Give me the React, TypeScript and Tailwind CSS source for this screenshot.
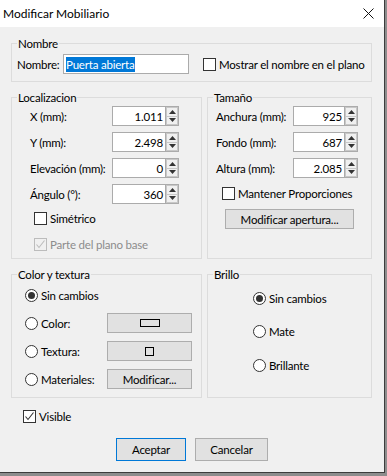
import type { ReactNode } from 'react';

const font = { fontFamily: 'Lato, "Noto Sans", sans-serif' };

function Group({ title, className, children }: { title: string; className: string; children: ReactNode }) {
  return (
    <div className={`relative shrink-0 border border-[#dcdcdc] ${className}`}>
      <span className="absolute -top-[8px] left-[5px] bg-[#f0f0f0] px-px leading-[15px]">{title}</span>
      {children}
    </div>
  );
}

function CheckBox({ checked = false, disabled = false }: { checked?: boolean; disabled?: boolean }) {
  return (
    <span
      className={`flex h-[13px] w-[13px] shrink-0 items-center justify-center border ${
        disabled ? 'border-[#bcbcbc] bg-[#f0f0f0]' : 'border-[#333333] bg-white'
      }`}
    >
      {checked && (
        <svg width="11" height="11" viewBox="0 0 11 11">
          <polyline points="1.5,5.5 4,8.5 9.5,1.5" fill="none" stroke={disabled ? '#bcbcbc' : '#333'} strokeWidth="1.1" />
        </svg>
      )}
    </span>
  );
}

function Radio({ checked = false }: { checked?: boolean }) {
  return (
    <span className="flex h-[13px] w-[13px] shrink-0 items-center justify-center rounded-full border border-[#333333] bg-white">
      {checked && <span className="h-[7px] w-[7px] rounded-full bg-[#333333]" />}
    </span>
  );
}

function Spin({ value, width }: { value: string; width: string }) {
  return (
    <div className="flex h-[20px] shrink-0">
      <div className={`flex ${width} items-center justify-end border border-[#ababab] bg-white pr-[2px]`}>{value}</div>
      <div className="flex w-[13px] flex-col border-y border-r border-[#ababab] bg-white">
        <div className="flex flex-1 items-center justify-center border border-[#c8c8c8] bg-[#f0f0f0]">
          <svg width="7" height="4" viewBox="0 0 7 4"><polygon points="0,4 3.5,0 7,4" fill="#333" /></svg>
        </div>
        <div className="flex flex-1 items-center justify-center border border-t-0 border-[#c8c8c8] bg-[#f0f0f0]">
          <svg width="7" height="4" viewBox="0 0 7 4"><polygon points="0,0 3.5,4 7,0" fill="#333" /></svg>
        </div>
      </div>
    </div>
  );
}

function FieldRow({ label, value, labelWidth, fieldWidth }: { label: string; value: string; labelWidth: string; fieldWidth: string }) {
  return (
    <div className="flex h-[20px] items-center whitespace-nowrap">
      <span className={`shrink-0 ${labelWidth}`}>{label}</span>
      <Spin value={value} width={fieldWidth} />
    </div>
  );
}

function Button({ children, className }: { children: ReactNode; className: string }) {
  return (
    <div className={`flex shrink-0 items-center justify-center whitespace-nowrap border border-[#adadad] bg-[#e1e1e1] ${className}`}>
      {children}
    </div>
  );
}

export default function App() {
  return (
    <div
      className="flex h-[476px] w-[387px] flex-col bg-[#8d8d8d] text-[11.5px] leading-[15px] tracking-[-0.2px] text-black"
      style={font}
    >
      <div className="flex h-[473px] w-[385px] flex-col border-b border-r border-[#3c3c3c] bg-[#f0f0f0]">
        {/* title bar */}
        <div className="flex h-[27px] shrink-0 items-center justify-between bg-white pl-[3px] pr-[10px]">
          <span className="text-[12px] tracking-normal">Modificar Mobiliario</span>
          <svg width="11" height="11" viewBox="0 0 11 11">
            <path d="M0.5 0.5 L10.5 10.5 M10.5 0.5 L0.5 10.5" stroke="#111" strokeWidth="1" />
          </svg>
        </div>

        <div className="flex flex-col whitespace-nowrap px-[11px]">
          <Group title="Nombre" className="mt-[16px] h-[39px] w-[361px]">
            <div className="flex items-center pl-[5px] pt-[10px]">
              <span className="w-[46px] shrink-0">Nombre:</span>
              <div className="flex h-[20px] w-[126px] shrink-0 items-center border border-[#ababab] bg-white pl-[2px]">
                <span className="bg-[#0078d7] text-white">Puerta abierta</span>
              </div>
              <div className="ml-[14px] flex items-center gap-[3px]">
                <CheckBox />
                <span>Mostrar el nombre en el plano</span>
              </div>
            </div>
          </Group>

          <div className="mt-[15px] flex gap-[5px]">
            <Group title="Localizacion" className="h-[162px] w-[191px]">
              <div className="flex flex-col gap-[6px] pl-[18px] pt-[8px]">
                <FieldRow label="X (mm):" value="1.011" labelWidth="w-[82px]" fieldWidth="w-[54px]" />
                <FieldRow label="Y (mm):" value="2.498" labelWidth="w-[82px]" fieldWidth="w-[54px]" />
                <FieldRow label="Elevación (mm):" value="0" labelWidth="w-[82px]" fieldWidth="w-[54px]" />
                <FieldRow label="Ángulo (°):" value="360" labelWidth="w-[82px]" fieldWidth="w-[54px]" />
              </div>
              <div className="mt-[7px] flex items-center gap-[3px] pl-[22px]">
                <CheckBox />
                <span>Simétrico</span>
              </div>
              <div className="mt-[11px] flex items-center gap-[3px] pl-[22px] text-[#8c8c8c]">
                <CheckBox checked disabled />
                <span>Parte del plano base</span>
              </div>
            </Group>

            <Group title="Tamaño" className="h-[162px] w-[165px]">
              <div className="flex flex-col gap-[6px] pl-[8px] pt-[8px]">
                <FieldRow label="Anchura (mm):" value="925" labelWidth="w-[77px]" fieldWidth="w-[52px]" />
                <FieldRow label="Fondo (mm):" value="687" labelWidth="w-[77px]" fieldWidth="w-[52px]" />
                <FieldRow label="Altura (mm):" value="2.085" labelWidth="w-[77px]" fieldWidth="w-[52px]" />
              </div>
              <div className="mt-[8px] flex items-center gap-[3px] pl-[14px]">
                <CheckBox />
                <span>Mantener Proporciones</span>
              </div>
              <div className="mt-[8px] pl-[17px]">
                <Button className="h-[20px] w-[129px]">Modificar apertura...</Button>
              </div>
            </Group>
          </div>

          <div className="mt-[15px] flex gap-[5px]">
            <Group title="Color y textura" className="h-[124px] w-[191px]">
              <div className="flex flex-col gap-[8px] pl-[13px] pt-[10px]">
                <div className="flex h-[20px] items-center gap-[3px]">
                  <Radio checked />
                  <span>Sin cambios</span>
                </div>
                <div className="flex h-[20px] items-center">
                  <div className="flex w-[82px] shrink-0 items-center gap-[3px]">
                    <Radio />
                    <span>Color:</span>
                  </div>
                  <Button className="h-[20px] w-[85px]">
                    <span className="h-[8px] w-[20px] border border-black" />
                  </Button>
                </div>
                <div className="flex h-[20px] items-center">
                  <div className="flex w-[82px] shrink-0 items-center gap-[3px]">
                    <Radio />
                    <span>Textura:</span>
                  </div>
                  <Button className="h-[20px] w-[85px]">
                    <span className="h-[9px] w-[9px] border border-black" />
                  </Button>
                </div>
                <div className="flex h-[20px] items-center">
                  <div className="flex w-[82px] shrink-0 items-center gap-[3px]">
                    <Radio />
                    <span>Materiales:</span>
                  </div>
                  <Button className="h-[20px] w-[85px]">Modificar...</Button>
                </div>
              </div>
            </Group>

            <Group title="Brillo" className="h-[124px] w-[165px]">
              <div className="flex flex-col pl-[45px] pt-[13px]">
                <div className="flex h-[20px] items-center gap-[3px]">
                  <Radio checked />
                  <span>Sin cambios</span>
                </div>
                <div className="mt-[13px] flex h-[20px] items-center gap-[3px]">
                  <Radio />
                  <span>Mate</span>
                </div>
                <div className="mt-[14px] flex h-[20px] items-center gap-[3px]">
                  <Radio />
                  <span>Brillante</span>
                </div>
              </div>
            </Group>
          </div>

          <div className="mt-[12px] flex h-[13px] items-center gap-[3px] pl-[12px]">
            <CheckBox checked />
            <span>Visible</span>
          </div>

          <div className="mt-[15px] flex gap-[9px] pl-[105px]">
            <Button className="h-[23px] w-[70px] !border-[#0078d7]">Aceptar</Button>
            <Button className="h-[23px] w-[73px]">Cancelar</Button>
          </div>
        </div>
      </div>
    </div>
  );
}
